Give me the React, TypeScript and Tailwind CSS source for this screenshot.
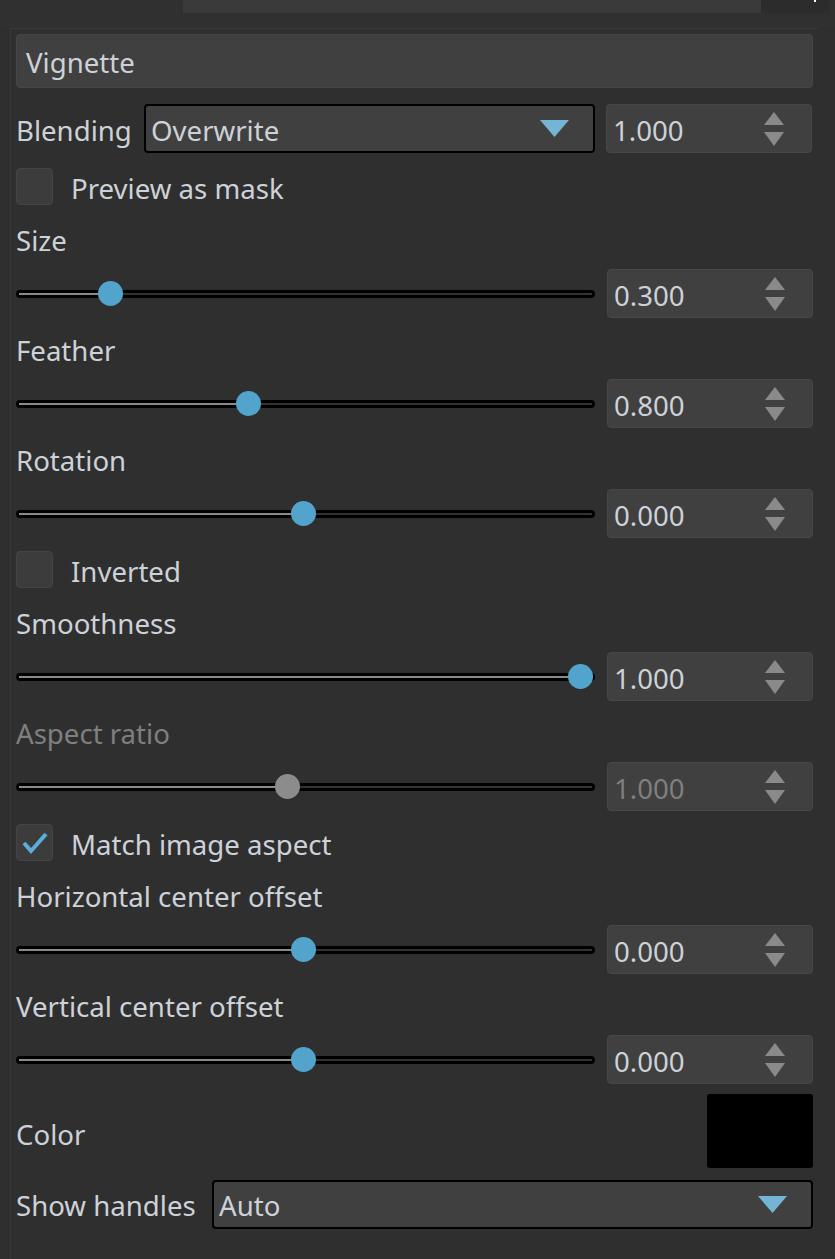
import React from "react";

const TXT = "text-[#cdd2d8] relative top-[2px]";
const DIS = "text-[#7f7f7f] relative top-[2px]";

function Spin({ value, disabled = false }: { value: string; disabled?: boolean }) {
  return (
    <div className="w-[206px] h-[49px] shrink-0 rounded-[4px] bg-[#404040] border border-[#474747] flex items-center pl-[6px] pr-[26px] justify-between">
      <span className={disabled ? DIS : TXT}>{value}</span>
      <svg width="22" height="36" viewBox="0 0 22 36" className="shrink-0">
        <polygon points="11,1 21,14 1,14" fill="#8a8a8a" />
        <polygon points="1,21 21,21 11,35" fill="#8a8a8a" />
      </svg>
    </div>
  );
}

function Slider({ pos, disabled = false }: { pos: number; disabled?: boolean }) {
  return (
    <div className="relative flex-1 h-full flex items-center mr-[12px]">
      <div className="w-full h-[8px] bg-black rounded-full flex items-center px-[3px]">
        <div className="h-[2px] w-full bg-[#333333] flex">
          <div className="h-[2px] bg-[#8a8a8a]" style={{ width: `${pos - 19}px` }} />
        </div>
      </div>
      <div
        className={`absolute w-[25px] h-[25px] rounded-full ${disabled ? "bg-[#8c8c8c]" : "bg-[#52a4cc]"}`}
        style={{ left: `${pos - 16 - 12.5}px`, top: "11.5px" }}
      />
    </div>
  );
}

function SliderBlock({ label, value, pos, disabled = false }: { label: string; value: string; pos: number; disabled?: boolean }) {
  return (
    <>
      <div className="h-[41px] flex items-center">
        <span className={disabled ? DIS : TXT}>{label}</span>
      </div>
      <div className="h-[49px] flex items-center">
        <Slider pos={pos} disabled={disabled} />
        <Spin value={value} disabled={disabled} />
      </div>
    </>
  );
}

function Check({ label, checked = false }: { label: string; checked?: boolean }) {
  return (
    <div className="h-[43px] flex items-center">
      <div className="w-[37px] h-[37px] rounded-[4px] bg-[#3c3c3c] border border-[#444] flex items-center justify-center">
        {checked && (
          <svg width="28" height="24" viewBox="0 0 28 24">
            <polyline points="3,12 10,20 25,3" fill="none" stroke="#5aaedb" strokeWidth="4" />
          </svg>
        )}
      </div>
      <span className={`ml-[18px] ${TXT}`}>{label}</span>
    </div>
  );
}

function Dropdown({ value, className }: { value: string; className: string }) {
  return (
    <div className={`h-[49px] rounded-[4px] bg-[#404040] border-2 border-black flex items-center justify-between pl-[5px] pr-[24px] ${className}`}>
      <span className={TXT}>{value}</span>
      <svg width="29" height="17" viewBox="0 0 29 17">
        <polygon points="0,0 29,0 14.5,17" fill="#74b5d6" />
      </svg>
    </div>
  );
}

export default function App() {
  return (
    <div
      className="w-[835px] h-[1259px] bg-[#2f2f2f] overflow-hidden text-[27.6px] leading-none"
      style={{ fontFamily: '"Noto Sans", "Open Sans", sans-serif' }}
    >
      {/* top tab strip */}
      <div className="h-[28px] flex items-start bg-[#303030]">
        <div className="w-[183px]" />
        <div className="w-[578px] h-[13px] bg-[#3a3a3a]" />
        <div className="w-[68px] h-[13px] bg-[#2c2c2c] rounded-br-[3px] relative">
          <div className="absolute left-[53px] top-0 w-[2px] h-[2px] bg-white" />
        </div>
      </div>
      <div className="ml-[10px] w-[808px] border-t border-l border-[#383838] h-[1231px] pl-[5px] pr-[5px] pt-[5px]">
        <div className="h-[54px] rounded-[4px] bg-[#404040] border border-[#464646] flex items-center pl-[9px]">
          <span className={TXT}>Vignette</span>
        </div>
        <div className="mt-[16px] h-[49px] flex items-center">
          <span className={`w-[128px] ${TXT}`}>Blending</span>
          <Dropdown value="Overwrite" className="w-[451px]" />
          <div className="ml-[11px]">
            <Spin value="1.000" />
          </div>
        </div>
        <div className="mt-[12px] flex flex-col gap-[10px]">
          <Check label="Preview as mask" />
          <SliderBlock label="Size" value="0.300" pos={110} />
          <SliderBlock label="Feather" value="0.800" pos={248} />
          <SliderBlock label="Rotation" value="0.000" pos={303} />
          <Check label="Inverted" />
          <SliderBlock label="Smoothness" value="1.000" pos={580} />
          <SliderBlock label="Aspect ratio" value="1.000" pos={287} disabled />
          <Check label="Match image aspect" checked />
          <SliderBlock label="Horizontal center offset" value="0.000" pos={303} />
          <SliderBlock label="Vertical center offset" value="0.000" pos={303} />
          <div className="h-[74px] flex items-center justify-between">
            <span className={`${TXT} mt-[4px]`}>Color</span>
            <div className="w-[106px] h-[74px] bg-black rounded-[3px]" />
          </div>
          <div className="mt-[2px] h-[48px] flex items-center">
            <span className={`w-[196px] ${TXT}`}>Show handles</span>
            <Dropdown value="Auto" className="flex-1" />
          </div>
        </div>
      </div>
    </div>
  );
}
